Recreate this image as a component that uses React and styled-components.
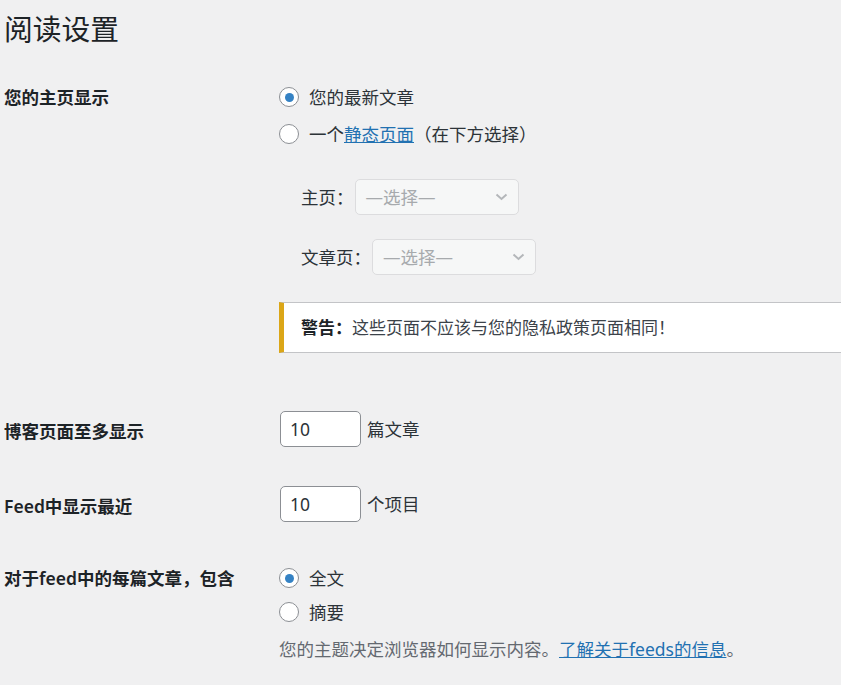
import React from 'react'
import styled, { createGlobalStyle } from 'styled-components';

const GlobalStyle = createGlobalStyle`
    html, body {
        margin: 0;
        padding: 0;
        background: #f0f0f1;
    }
    body {
        font-family: "Noto Sans", "Noto Sans CJK SC", sans-serif;
        color: #1d2327;
        overflow: hidden;
    }
`;

function Radio({ checked, name, children }) {
    return (
        <RadioLabel>
            <RadioInput type="radio" name={name} defaultChecked={checked} />
            <span>{children}</span>
        </RadioLabel>
    )
}

function PageSelect({ label }) {
    return (
        <SelectRow>
            <span>{label}</span>
            <SelectBox>
                <span>—选择—</span>
                <svg width="13" height="8" viewBox="0 0 13 8">
                    <polyline points="1.5,1.5 6.5,6 11.5,1.5" fill="none" stroke="#b4b7ba" strokeWidth="2" />
                </svg>
            </SelectBox>
        </SelectRow>
    )
}

function App() {
    return (
        <Page>
            <GlobalStyle />
            <Title>阅读设置</Title>

            <FormTable>
                <Row>
                    <Th>您的主页显示</Th>
                    <Td $pt={23} $pb={43}>
                        <Fieldset $gap={13}>
                            <Radio name="front" checked>您的最新文章</Radio>
                            <Radio name="front">
                                一个<Link>静态页面</Link>（在下方选择）
                            </Radio>
                        </Fieldset>

                        <Selects>
                            <PageSelect label="主页：" />
                            <PageSelect label="文章页：" />
                        </Selects>

                        <Notice>
                            <strong>警告：</strong>这些页面不应该与您的隐私政策页面相同！
                        </Notice>
                    </Td>
                </Row>

                <Row>
                    <Th>博客页面至多显示</Th>
                    <Td $pt={15} $pb={24}>
                        <InputLine>
                            <NumberInput type="number" defaultValue={10} />
                            <span>篇文章</span>
                        </InputLine>
                    </Td>
                </Row>

                <Row>
                    <Th>Feed中显示最近</Th>
                    <Td $pt={15} $pb={21}>
                        <InputLine>
                            <NumberInput type="number" defaultValue={10} />
                            <span>个项目</span>
                        </InputLine>
                    </Td>
                </Row>

                <Row>
                    <Th>对于feed中的每篇文章，包含</Th>
                    <Td $pt={23} $pb={20}>
                        <Fieldset $gap={10}>
                            <Radio name="feed" checked>全文</Radio>
                            <Radio name="feed">摘要</Radio>
                        </Fieldset>
                        <Description>
                            您的主题决定浏览器如何显示内容。<Link>了解关于feeds的信息</Link>。
                        </Description>
                    </Td>
                </Row>
            </FormTable>
        </Page>
    )
}

export default App;


const Page = styled.div`
    width: 841px;
    height: 685px;
    padding-left: 4px;
    box-sizing: border-box;
    overflow: hidden;
`;

const Title = styled.h1`
    margin: 0;
    padding-top: 10px;
    font-size: 28.75px;
    line-height: 38px;
    font-weight: 400;
    color: #1d2327;
`;

const FormTable = styled.div`
    margin-top: 14px;
`;

const Row = styled.div`
    display: grid;
    grid-template-columns: 275px 1fr;
`;

const Th = styled.div`
    padding-top: 24px;
    font-size: 17.5px;
    line-height: 22px;
    font-weight: 600;
    color: #1d2327;
`;

const Td = styled.div`
    padding-top: ${p => p.$pt}px;
    padding-bottom: ${p => p.$pb}px;
    font-size: 17.5px;
    line-height: 22px;
    color: #2c3338;
`;

const Fieldset = styled.div`
    display: flex;
    flex-direction: column;
    gap: ${p => p.$gap}px;
`;

const RadioLabel = styled.label`
    display: flex;
    align-items: center;
    gap: 10px;
    height: 24px;
    white-space: nowrap;
`;

const RadioInput = styled.input`
    appearance: none;
    margin: 0;
    width: 20px;
    height: 20px;
    border: 1px solid #8c8f94;
    border-radius: 50%;
    background: #fff;
    box-sizing: border-box;
    display: grid;
    place-items: center;

    &:checked::before {
        content: "";
        width: 9px;
        height: 9px;
        border-radius: 50%;
        background: #3582c4;
    }
`;

const Link = styled.a`
    color: #2271b1;
    text-decoration: underline;
    cursor: pointer;
`;

const Selects = styled.div`
    margin-top: 33px;
    padding-left: 22px;
    display: flex;
    flex-direction: column;
    gap: 24px;
`;

const SelectRow = styled.label`
    display: flex;
    align-items: center;
    gap: 1px;
    color: #2c3338;
`;

const SelectBox = styled.div`
    width: 164px;
    height: 36px;
    box-sizing: border-box;
    padding: 0 10px;
    display: flex;
    align-items: center;
    justify-content: space-between;
    border: 1px solid #dcdcde;
    border-radius: 5px;
    background: #f6f7f7;
    color: #a7aaad;
`;

const Notice = styled.div`
    margin-top: 27px;
    width: 620px;
    box-sizing: border-box;
    padding: 14px 17px 13px;
    background: #fff;
    border: 1px solid #c3c4c7;
    border-left: 5px solid #dba617;
    font-size: 17px;
    line-height: 22px;
    color: #3c434a;
    white-space: nowrap;

    strong {
        font-weight: 600;
        color: #1d2327;
    }
`;

const InputLine = styled.div`
    display: flex;
    align-items: center;
    gap: 6px;
`;

const NumberInput = styled.input`
    width: 81px;
    height: 36px;
    margin: 0 0 0 1px;
    box-sizing: border-box;
    padding: 0 9px;
    border: 1px solid #8c8f94;
    border-radius: 5px;
    background: #fff;
    font-family: inherit;
    font-size: 17.5px;
    color: #2c3338;
    appearance: textfield;

    &::-webkit-inner-spin-button,
    &::-webkit-outer-spin-button {
        -webkit-appearance: none;
        margin: 0;
    }
`;

const Description = styled.p`
    margin: 14px 0 0;
    font-size: 17.5px;
    line-height: 22px;
    color: #646970;
    white-space: nowrap;
`;
